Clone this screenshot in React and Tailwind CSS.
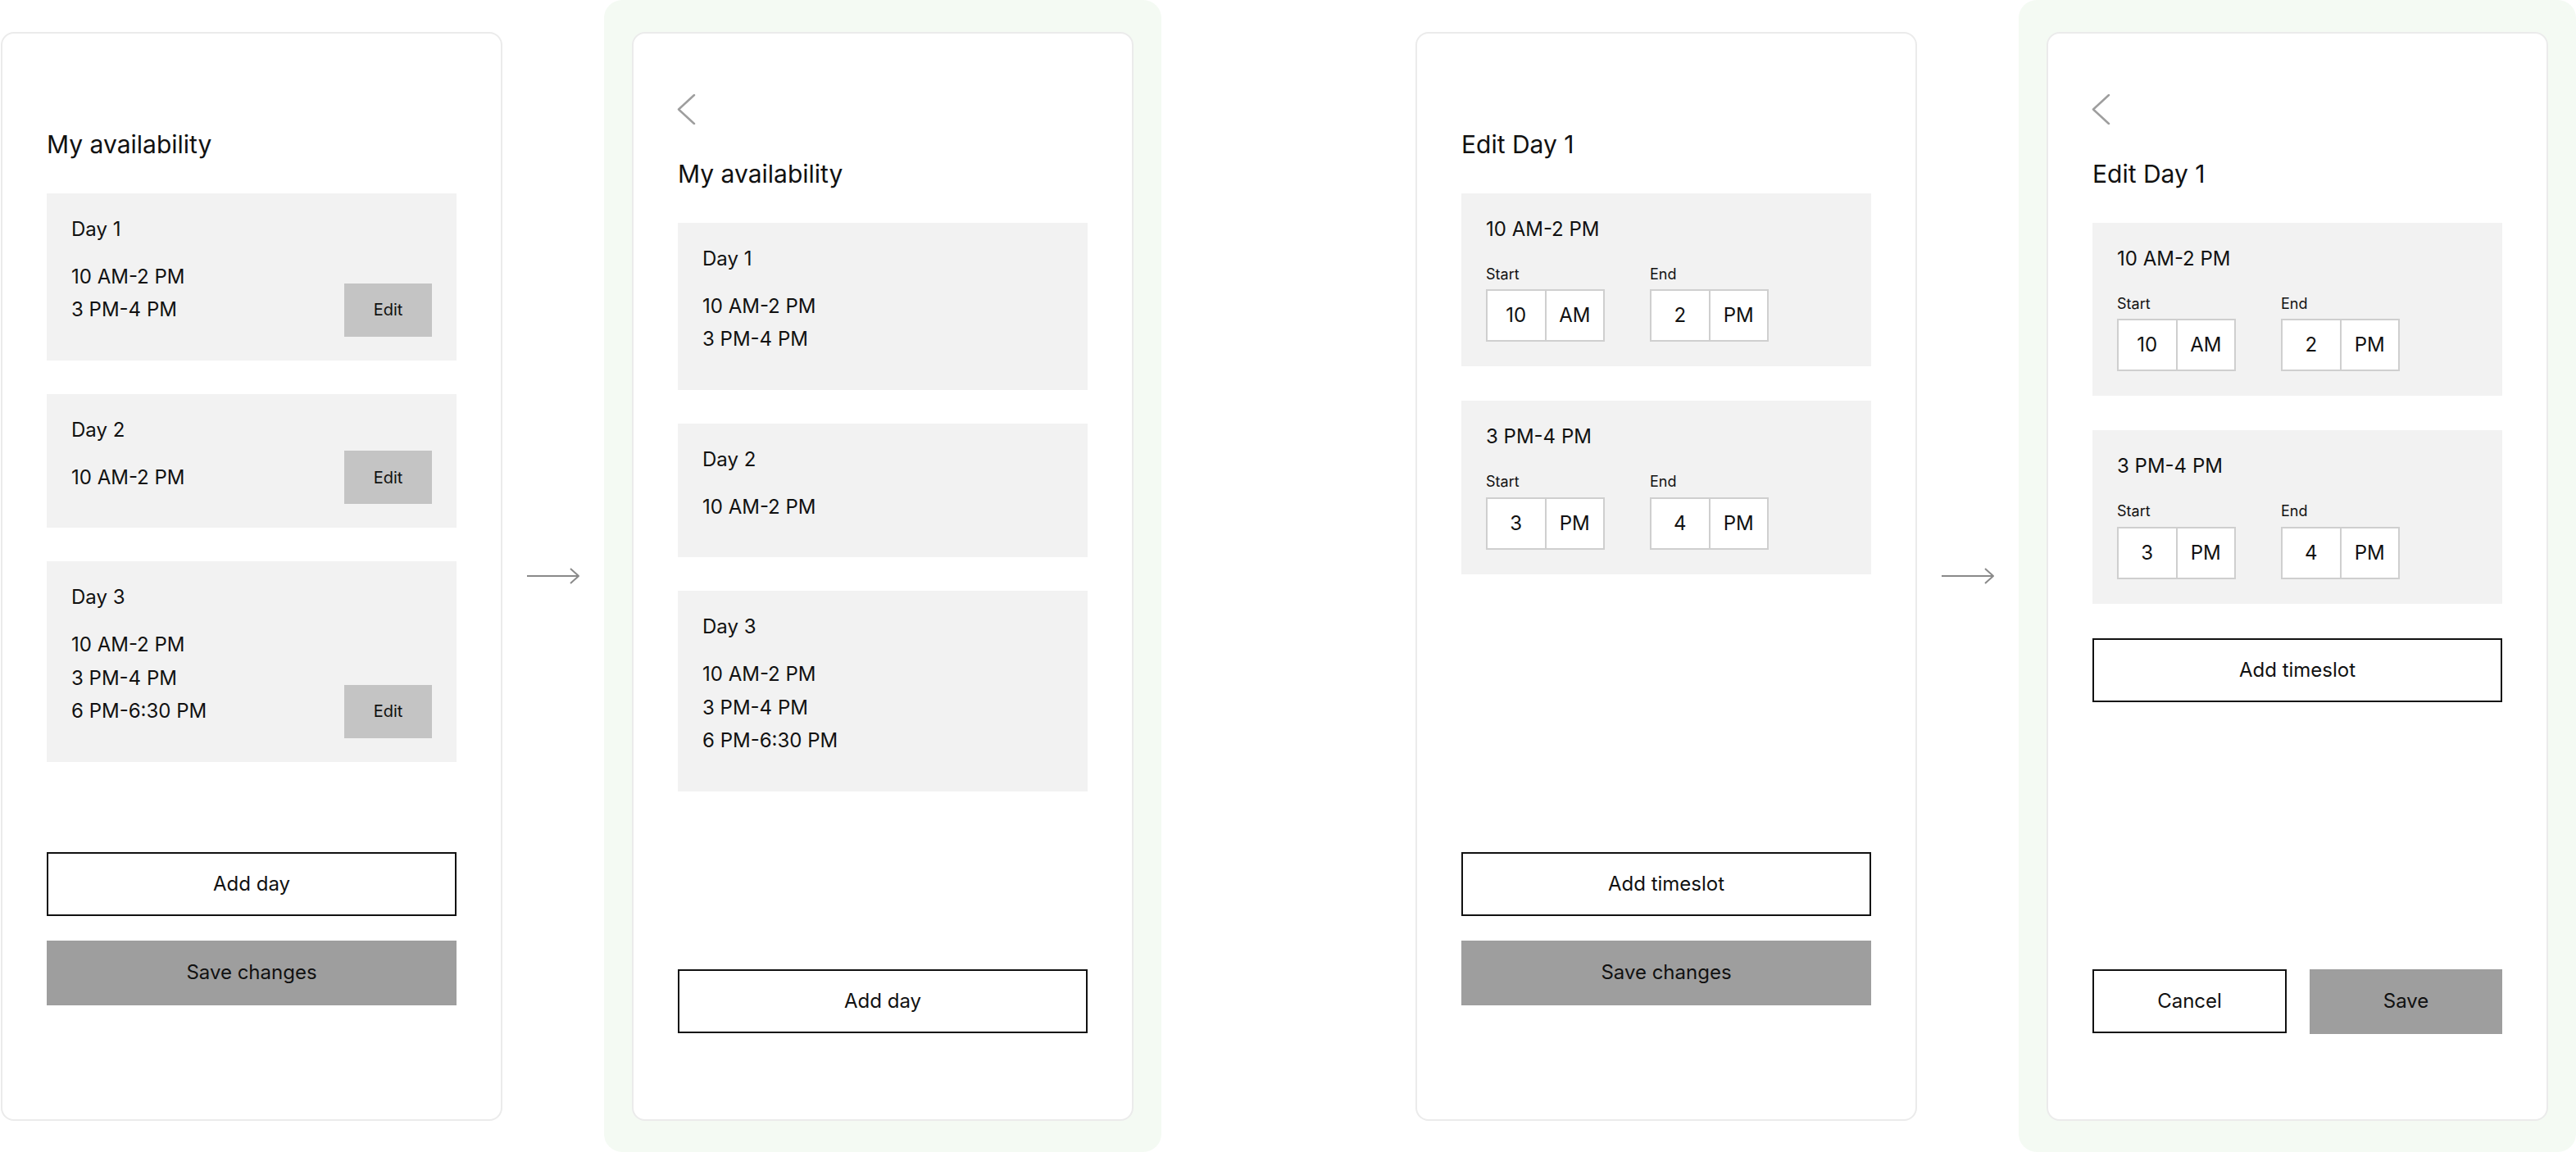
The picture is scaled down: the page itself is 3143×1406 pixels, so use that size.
import React from 'react';

const BackChevron = () => (
  <svg width="24" height="37" viewBox="0 0 24 37" fill="none" className="block -ml-[2px]">
    <polyline points="22,1 3,18.5 22,36" stroke="#9e9e9e" strokeWidth="2.5" strokeLinecap="round" strokeLinejoin="round" />
  </svg>
);

const FlowArrow = () => (
  <svg width="66" height="22" viewBox="0 0 66 22" fill="none">
    <line x1="1" y1="11" x2="64" y2="11" stroke="#8a8a8a" strokeWidth="2" />
    <polyline points="54,2 64,11 54,20" stroke="#8a8a8a" strokeWidth="2" strokeLinejoin="round" />
  </svg>
);

const Card = ({ children, className = '' }) => (
  <div className={`flex h-[1329px] w-[612px] shrink-0 flex-col rounded-[16px] border-2 border-[#ebebeb] bg-white px-[54px] ${className}`}>
    {children}
  </div>
);

const Title = ({ children }) => (
  <h1 className="mb-[43px] text-[30px] leading-[34px] font-normal text-[#111]">{children}</h1>
);

// day block with its timeslots; the edit button sits centred on the last line
const DayBox = ({ day, slots, editable }) => (
  <div className="bg-[#f2f2f2] px-[30px] pt-[24px] pb-[41px] text-[24px] text-[#111]">
    <div className="leading-[40px]">{day}</div>
    <div className="mt-[18px]">
      {slots.map((slot, i) => (
        <div key={slot} className="flex h-[40.5px] items-center justify-between">
          <span>{slot}</span>
          {editable && i === slots.length - 1 && (
            <button className="h-[65px] w-[107px] shrink-0 bg-[#c4c4c4] text-[20px] text-[#111]">Edit</button>
          )}
        </div>
      ))}
    </div>
  </div>
);

const TimeField = ({ label, hour, period }) => (
  <div>
    <div className="text-[18px] leading-[22px]">{label}</div>
    <div className="mt-[7.5px] flex">
      <div className="flex h-[64px] w-[73.5px] items-center justify-center border-2 border-[#cfcfcf] bg-white">{hour}</div>
      <div className="-ml-[2px] flex h-[64px] w-[73.5px] items-center justify-center border-2 border-[#cfcfcf] bg-white">{period}</div>
    </div>
  </div>
);

const SlotBox = ({ slot }) => (
  <div className="bg-[#f2f2f2] px-[30px] pt-[24px] pb-[30px] text-[24px] text-[#111]">
    <div className="leading-[40px]">{slot.label}</div>
    <div className="mt-[24px] flex gap-[55px]">
      <TimeField label="Start" hour={slot.start[0]} period={slot.start[1]} />
      <TimeField label="End" hour={slot.end[0]} period={slot.end[1]} />
    </div>
  </div>
);

const OutlineButton = ({ children, className = '' }) => (
  <button className={`h-[78px] w-full border-2 border-[#111] bg-white text-[24px] text-[#111] ${className}`}>{children}</button>
);

const FilledButton = ({ children, className = '' }) => (
  <button className={`h-[79px] w-full bg-[#9e9e9e] text-[24px] text-[#111] ${className}`}>{children}</button>
);

const days = [
  { day: 'Day 1', slots: ['10 AM-2 PM', '3 PM-4 PM'] },
  { day: 'Day 2', slots: ['10 AM-2 PM'] },
  { day: 'Day 3', slots: ['10 AM-2 PM', '3 PM-4 PM', '6 PM-6:30 PM'] },
];

const slots = [
  { label: '10 AM-2 PM', start: ['10', 'AM'], end: ['2', 'PM'] },
  { label: '3 PM-4 PM', start: ['3', 'PM'], end: ['4', 'PM'] },
];

const GreenFrame = ({ children }) => (
  <div className="flex h-full shrink-0 items-center rounded-[22px] bg-[#f4faf3] px-[34px]">{children}</div>
);

export default function App() {
  return (
    <div className="flex h-[1406px] w-[3143px] items-center overflow-hidden bg-white font-['Inter',sans-serif]">
      {/* 1: availability list */}
      <Card className="ml-[1px] pt-[118px] pb-[139px]">
        <Title>My availability</Title>
        <div className="flex flex-col gap-[41px]">
          {days.map((d) => (
            <DayBox key={d.day} {...d} editable />
          ))}
        </div>
        <div className="mt-auto flex flex-col gap-[30px]">
          <OutlineButton>Add day</OutlineButton>
          <FilledButton>Save changes</FilledButton>
        </div>
      </Card>

      <div className="flex w-[124px] shrink-0 justify-center">
        <FlowArrow />
      </div>

      {/* 2: availability, read only */}
      <GreenFrame>
        <Card className="pt-[74px] pb-[105px]">
          <div className="mb-[43px]">
            <BackChevron />
          </div>
          <Title>My availability</Title>
          <div className="flex flex-col gap-[41px]">
            {days.map((d) => (
              <DayBox key={d.day} {...d} />
            ))}
          </div>
          <div className="mt-auto">
            <OutlineButton>Add day</OutlineButton>
          </div>
        </Card>
      </GreenFrame>

      {/* 3: edit day */}
      <Card className="ml-[310px] pt-[118px] pb-[139px]">
        <Title>Edit Day 1</Title>
        <div className="flex flex-col gap-[42px]">
          {slots.map((s) => (
            <SlotBox key={s.label} slot={s} />
          ))}
        </div>
        <div className="mt-auto flex flex-col gap-[30px]">
          <OutlineButton>Add timeslot</OutlineButton>
          <FilledButton>Save changes</FilledButton>
        </div>
      </Card>

      <div className="flex w-[124px] shrink-0 justify-center">
        <FlowArrow />
      </div>

      {/* 4: edit day with back nav */}
      <GreenFrame>
        <Card className="pt-[74px] pb-[104px]">
          <div className="mb-[43px]">
            <BackChevron />
          </div>
          <Title>Edit Day 1</Title>
          <div className="flex flex-col gap-[42px]">
            {slots.map((s) => (
              <SlotBox key={s.label} slot={s} />
            ))}
          </div>
          <OutlineButton className="mt-[42px]">Add timeslot</OutlineButton>
          <div className="mt-auto flex gap-[28px]">
            <OutlineButton className="h-[77px]">Cancel</OutlineButton>
            <FilledButton className="h-[77px]">Save</FilledButton>
          </div>
        </Card>
      </GreenFrame>
    </div>
  );
}
